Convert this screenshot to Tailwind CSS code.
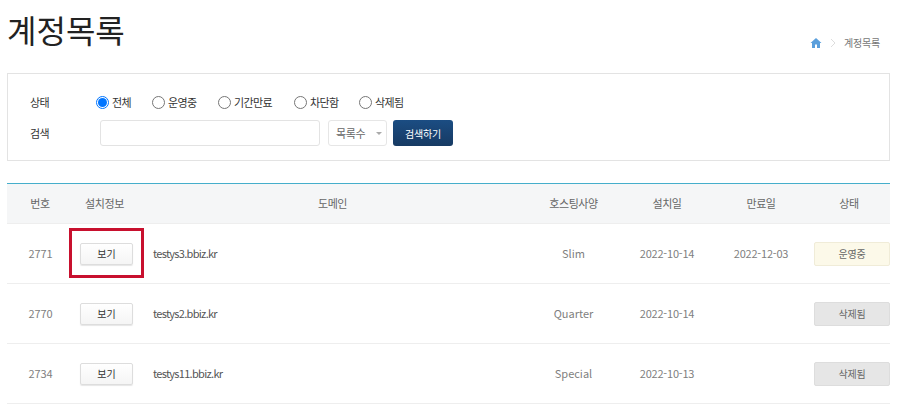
<!DOCTYPE html>
<html lang="ko">
<head>
  <meta charset="UTF-8">
  <title>계정목록</title>
  <script src="https://cdn.jsdelivr.net/npm/@tailwindcss/browser@4"></script>
</head>
<body class="h-[411px] overflow-hidden bg-white font-['Noto_Sans_CJK_KR','Noto_Sans',sans-serif] text-[11px] text-[#555]">
  <div class="pl-[7px] pr-[9px]">
    <!-- title -->
    <div class="flex h-[73px] items-start justify-between">
      <h1 class="mt-[7px] text-[32px] leading-[44px] font-normal text-[#222]">계정목록</h1>
      <div class="mt-[36px] mr-[10px] flex items-center text-[10px] leading-[14px] tracking-[-0.2px] text-[#777]">
        <svg class="h-[12px] w-[12px]" viewBox="0 0 24 24" fill="#5a9fdc"><path d="M12 2 1 12h3v10h6v-7h4v7h6V12h3z"/></svg>
        <svg class="mx-[8px] h-[10px] w-[6px]" viewBox="0 0 6 10" fill="none" stroke="#ddd"><path d="m1 1 4 4-4 4"/></svg>
        <span>계정목록</span>
      </div>
    </div>

    <!-- search -->
    <div class="h-[88px] border border-[#e3e3e3] px-[22px] pt-[18px]">
      <div class="flex h-[20px] items-center text-[11px] tracking-[-0.6px] text-[#333]">
        <span class="w-[66px]">상태</span>
        <label class="flex w-[56px] items-center gap-[3px]"><span class="flex h-[13px] w-[13px] items-center justify-center rounded-full border border-[#0075ff]"><span class="h-[9px] w-[9px] rounded-full bg-[#0075ff]"></span></span>전체</label>
        <label class="flex w-[66px] items-center gap-[3px]"><span class="h-[13px] w-[13px] rounded-full border border-[#767676]"></span>운영중</label>
        <label class="flex w-[76px] items-center gap-[3px]"><span class="h-[13px] w-[13px] rounded-full border border-[#767676]"></span>기간만료</label>
        <label class="flex w-[65px] items-center gap-[3px]"><span class="h-[13px] w-[13px] rounded-full border border-[#767676]"></span>차단함</label>
        <label class="flex items-center gap-[3px]"><span class="h-[13px] w-[13px] rounded-full border border-[#767676]"></span>삭제됨</label>
      </div>
      <div class="mt-[8px] flex h-[26px] items-center">
        <span class="w-[70px] tracking-[-0.6px] text-[#333]">검색</span>
        <div class="h-[26px] w-[220px] rounded-[3px] border border-[#e3e3e3] bg-white"></div>
        <div class="ml-[8px] flex h-[26px] w-[59px] items-center justify-between rounded-[3px] border border-[#e6e6e6] pr-[4px] pl-[7px] tracking-[-0.4px] text-[#666]">
          <span>목록수</span>
          <span class="h-0 w-0 border-x-[3px] border-t-[3px] border-x-transparent border-t-[#aaa]"></span>
        </div>
        <button class="ml-[6px] h-[26px] w-[60px] rounded-[3px] bg-gradient-to-b from-[#1b4d83] to-[#173a63] text-[10px] tracking-[-0.2px] text-white">검색하기</button>
      </div>
    </div>

    <!-- list -->
    <table class="mt-[22px] w-[883px] table-fixed border-collapse border-t border-[#45aecb] text-center">
      <colgroup>
        <col class="w-[66px]"><col class="w-[67px]"><col class="w-[385px]"><col class="w-[95px]"><col class="w-[94px]"><col class="w-[94px]"><col class="w-[82px]">
      </colgroup>
      <thead>
        <tr class="h-[40px] border-b border-[#eee] bg-[#f5f6f7] tracking-[-0.4px] text-[#666]">
          <th class="font-normal">번호</th>
          <th class="pr-[4px] font-normal">설치정보</th>
          <th class="font-normal">도메인</th>
          <th class="pl-[2px] font-normal">호스팅사양</th>
          <th class="font-normal">설치일</th>
          <th class="font-normal">만료일</th>
          <th class="font-normal">상태</th>
        </tr>
      </thead>
      <tbody class="text-[#808080]">
        <tr class="h-[60px] border-b border-[#eee]">
          <td class="pl-[1px] tracking-[-0.1px]">2771</td>
          <td class="relative">
            <div class="absolute top-[4px] left-[-4px] h-[50px] w-[75px] border-[3px] border-[#c8102e]"></div>
            <button class="relative h-[22px] w-[53px] rounded-[2px] border border-[#ddd] bg-gradient-to-b from-white to-[#f5f5f5] text-[10px] text-[#333] shadow-[0_1px_1px_rgba(0,0,0,0.1)]">보기</button>
          </td>
          <td class="pl-[13px] text-left tracking-[-0.7px] text-[#555]">testys3.bbiz.kr</td>
          <td class="pl-[2px]">Slim</td>
          <td class="tracking-[-0.2px]">2022-10-14</td>
          <td class="tracking-[-0.2px]">2022-12-03</td>
          <td class="pl-[6px]"><div class="flex h-[24px] w-[76px] items-center justify-center rounded-[2px] border border-[#f0ecd8] bg-[#fcf9e9] text-[10px] tracking-[-0.2px] text-[#666]">운영중</div></td>
        </tr>
        <tr class="h-[60px] border-b border-[#eee]">
          <td class="pl-[1px] tracking-[-0.1px]">2770</td>
          <td><button class="h-[22px] w-[53px] rounded-[2px] border border-[#ddd] bg-gradient-to-b from-white to-[#f5f5f5] text-[10px] text-[#333] shadow-[0_1px_1px_rgba(0,0,0,0.1)]">보기</button></td>
          <td class="pl-[13px] text-left tracking-[-0.7px] text-[#555]">testys2.bbiz.kr</td>
          <td class="pl-[2px]">Quarter</td>
          <td class="tracking-[-0.2px]">2022-10-14</td>
          <td></td>
          <td class="pl-[6px]"><div class="flex h-[24px] w-[76px] items-center justify-center rounded-[2px] border border-[#ddd] bg-[#e6e6e6] text-[10px] tracking-[-0.2px] text-[#666]">삭제됨</div></td>
        </tr>
        <tr class="h-[60px] border-b border-[#eee]">
          <td class="pl-[1px] tracking-[-0.1px]">2734</td>
          <td><button class="h-[22px] w-[53px] rounded-[2px] border border-[#ddd] bg-gradient-to-b from-white to-[#f5f5f5] text-[10px] text-[#333] shadow-[0_1px_1px_rgba(0,0,0,0.1)]">보기</button></td>
          <td class="pl-[13px] text-left tracking-[-0.7px] text-[#555]">testys11.bbiz.kr</td>
          <td class="pl-[2px]">Special</td>
          <td class="tracking-[-0.2px]">2022-10-13</td>
          <td></td>
          <td class="pl-[6px]"><div class="flex h-[24px] w-[76px] items-center justify-center rounded-[2px] border border-[#ddd] bg-[#e6e6e6] text-[10px] tracking-[-0.2px] text-[#666]">삭제됨</div></td>
        </tr>
      </tbody>
    </table>
  </div>
</body>
</html>
